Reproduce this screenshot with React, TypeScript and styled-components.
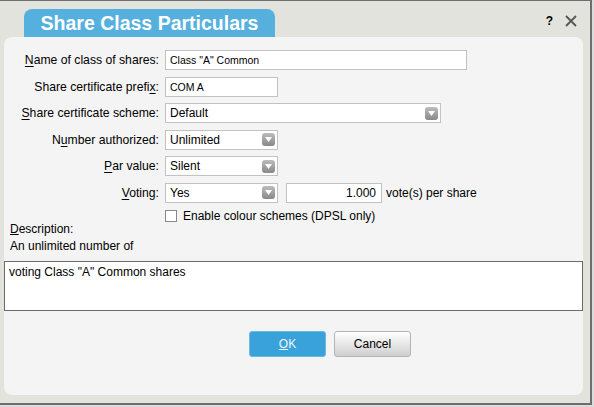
import styled, { createGlobalStyle } from 'styled-components'

const GlobalStyle = createGlobalStyle`
  html, body {
    margin: 0;
    padding: 0;
    background: #dcdcdc;
  }
  body {
    font-family: "Liberation Sans", Arial, sans-serif;
    font-size: 12px;
    color: #000;
  }
`

function Arrow() {
  return (
    <ArrowBox>
      <svg width="7" height="5" viewBox="0 0 7 5">
        <path d="M0 0 H7 L3.5 5 Z" fill="#fff" />
      </svg>
    </ArrowBox>
  )
}

function App() {
  return (
    <>
      <GlobalStyle />
      <Window>
        <Header>
          <Tab>Share Class Particulars</Tab>
          <Tools>
            <Help>?</Help>
            <svg width="12" height="12" viewBox="0 0 12 12">
              <path d="M1 1 L11 11 M11 1 L1 11" stroke="#555" strokeWidth="1.8" />
            </svg>
          </Tools>
        </Header>

        <Panel>
          <Form>
            <Row>
              <Label><u>N</u>ame of class of shares:</Label>
              <TextInput $width={302}>Class "A" Common</TextInput>
            </Row>
            <Row>
              <Label>Share certificate prefi<u>x</u>:</Label>
              <TextInput $width={113}>COM A</TextInput>
            </Row>
            <Row>
              <Label><u>S</u>hare certificate scheme:</Label>
              <Select $width={276}>Default<Arrow /></Select>
            </Row>
            <Row>
              <Label>N<u>u</u>mber authorized:</Label>
              <Select $width={113}>Unlimited<Arrow /></Select>
            </Row>
            <Row>
              <Label><u>P</u>ar value:</Label>
              <Select $width={113}>Silent<Arrow /></Select>
            </Row>
            <Row>
              <Label><u>V</u>oting:</Label>
              <Select $width={113}>Yes<Arrow /></Select>
              <NumberInput>1.000</NumberInput>
              <Unit>vote(s) per share</Unit>
            </Row>
            <CheckRow>
              <Check />
              <span>Enable colour schemes (DPSL only)</span>
            </CheckRow>
          </Form>

          <Description>
            <div><u>D</u>escription:</div>
            <div>An unlimited number of</div>
          </Description>

          <TextArea>voting Class "A" Common shares</TextArea>

          <Buttons>
            <Button $primary><u>O</u>K</Button>
            <Button>Cancel</Button>
          </Buttons>
        </Panel>
      </Window>
    </>
  )
}

export default App

const Window = styled.div`
  width: 590px;
  height: 402px;
  background: #e3e3de;
  border-top: 1px solid #6e6e6e;
  border-right: 2px solid #6e6e6e;
  border-bottom: 2px solid #6e6e6e;
  display: flex;
  flex-direction: column;
`

const Header = styled.div`
  height: 36px;
  display: flex;
  align-items: flex-end;
  justify-content: space-between;
  padding-left: 24px;
  padding-right: 13px;
`

const Tab = styled.div`
  width: 251px;
  height: 28px;
  background: #56b0de;
  border-radius: 8px 8px 0 0;
  color: #fff;
  font-weight: bold;
  font-size: 19.5px;
  line-height: 28px;
  text-align: center;
`

const Tools = styled.div`
  display: flex;
  align-items: center;
  gap: 12px;
  height: 28px;
  padding-bottom: 2px;
`

const Help = styled.span`
  font-weight: bold;
  font-size: 12px;
`

const Panel = styled.div`
  margin-left: 4px;
  width: 579px;
  height: 358px;
  background: #f4f4f4;
  border-radius: 8px;
  display: flex;
  flex-direction: column;
`

const Form = styled.div`
  display: flex;
  flex-direction: column;
  gap: 6.6px;
  padding-top: 13px;
`

const Row = styled.div`
  display: flex;
  align-items: center;
  height: 20px;
`

const Label = styled.label`
  width: 155px;
  margin-right: 6px;
  text-align: right;
  white-space: nowrap;
  font-size: 12.2px;
  u {
    text-decoration-thickness: 1px;
    text-underline-offset: 2px;
  }
`

const Field = styled.div<{ $width?: number }>`
  box-sizing: border-box;
  height: 20px;
  width: ${p => (p.$width ? `${p.$width}px` : 'auto')};
  background: #fff;
  border: 1px solid #c2c2c2;
  display: flex;
  align-items: center;
  padding: 0 4px;
  white-space: nowrap;
`

const TextInput = styled(Field)`
  font-size: 10.5px;
`

const Select = styled(Field)`
  justify-content: space-between;
  padding-right: 2px;
`

const ArrowBox = styled.span`
  width: 13px;
  height: 13px;
  border-radius: 3px;
  background: linear-gradient(#bdbdbd, #888);
  display: flex;
  align-items: center;
  justify-content: center;
`

const NumberInput = styled(Field)`
  width: 96px;
  margin-left: 8px;
  justify-content: flex-end;
  padding-right: 5px;
`

const Unit = styled.span`
  margin-left: 4px;
`

const CheckRow = styled.div`
  display: flex;
  align-items: center;
  gap: 6px;
  padding-left: 161px;
  height: 14px;
  margin-top: -1px;
`

const Check = styled.span`
  box-sizing: border-box;
  width: 12px;
  height: 12px;
  background: #fff;
  border: 1px solid #8a8a8a;
`

const Description = styled.div`
  padding-left: 6px;
  margin-top: -2px;
  line-height: 17px;
`

const TextArea = styled.div`
  box-sizing: border-box;
  margin-top: 6px;
  height: 50px;
  background: #fff;
  border: 1px solid #6a6a6a;
  padding: 3px 4px;
  line-height: 15px;
`

const Buttons = styled.div`
  display: flex;
  gap: 8px;
  padding-left: 245px;
  margin-top: 20px;
`

const Button = styled.button<{ $primary?: boolean }>`
  box-sizing: border-box;
  width: 77px;
  height: 26px;
  border-radius: 3px;
  font-family: "Liberation Sans", Arial, sans-serif;
  font-size: 12px;
  border: 1px solid ${p => (p.$primary ? '#6fb8dd' : '#b4b4b4')};
  background: ${p => (p.$primary ? '#3aa2da' : 'linear-gradient(#ffffff, #cfcfcf)')};
  color: ${p => (p.$primary ? '#eef6fb' : '#000')};
  padding: 0;
`
